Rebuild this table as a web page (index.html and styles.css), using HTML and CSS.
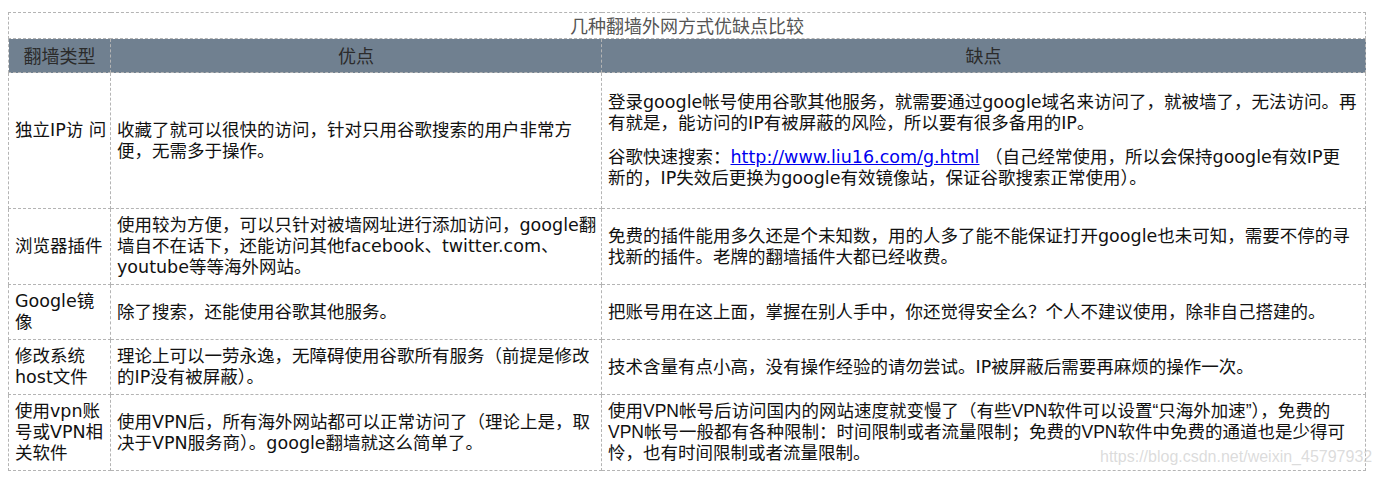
FILE: index.html
```html
<!DOCTYPE html>
<html lang="zh-CN">
<head>
  <meta charset="UTF-8">
  <title>几种翻墙外网方式优缺点比较</title>
  <link rel="stylesheet" href="styles.css">
</head>
<body>
  <div class="page">
    <table class="compare">
      <colgroup>
        <col class="col-type">
        <col class="col-pro">
        <col class="col-con">
      </colgroup>
      <thead>
        <tr class="title-row">
          <th colspan="3">几种翻墙外网方式优缺点比较</th>
        </tr>
        <tr class="head-row">
          <th>翻墙类型</th>
          <th>优点</th>
          <th>缺点</th>
        </tr>
      </thead>
      <tbody>
        <tr>
          <td class="type nowrap lift">独立IP访 问</td>
          <td>收藏了就可以很快的访问，针对只用谷歌搜索的用户非常方便，无需多于操作。</td>
          <td>
            <p>登录google帐号使用谷歌其他服务，就需要通过google域名来访问了，就被墙了，无法访问。再有就是，能访问的IP有被屏蔽的风险，所以要有很多备用的IP。</p>
            <p class="narrow">谷歌快速搜索：<a href="#">http://www.liu16.com/g.html</a> （自己经常使用，所以会保持google有效IP更新的，IP失效后更换为google有效镜像站，保证谷歌搜索正常使用）。</p>
          </td>
        </tr>
        <tr>
          <td class="type">浏览器插件</td>
          <td>使用较为方便，可以只针对被墙网址进行添加访问，google翻墙自不在话下，还能访问其他facebook、twitter.com、youtube等等海外网站。</td>
          <td>免费的插件能用多久还是个未知数，用的人多了能不能保证打开google也未可知，需要不停的寻找新的插件。老牌的翻墙插件大都已经收费。</td>
        </tr>
        <tr>
          <td class="type">Google镜像</td>
          <td>除了搜索，还能使用谷歌其他服务。</td>
          <td>把账号用在这上面，掌握在别人手中，你还觉得安全么？个人不建议使用，除非自己搭建的。</td>
        </tr>
        <tr>
          <td class="type">修改系统host文件</td>
          <td>理论上可以一劳永逸，无障碍使用谷歌所有服务（前提是修改的IP没有被屏蔽）。</td>
          <td>技术含量有点小高，没有操作经验的请勿尝试。IP被屏蔽后需要再麻烦的操作一次。</td>
        </tr>
        <tr>
          <td class="type">使用vpn账号或VPN相关软件</td>
          <td>使用VPN后，所有海外网站都可以正常访问了（理论上是，取决于VPN服务商）。google翻墙就这么简单了。</td>
          <td class="alt">使用VPN帐号后访问国内的网站速度就变慢了（有些VPN软件可以设置“只海外加速”），免费的VPN帐号一般都有各种限制：时间限制或者流量限制；免费的VPN软件中免费的通道也是少得可怜，也有时间限制或者流量限制。</td>
        </tr>
      </tbody>
    </table>
    <div class="watermark">https://blog.csdn.net/weixin_45797932</div>
  </div>
</body>
</html>
```

FILE: styles.css
```css
body {
  margin: 0;
  background: #fff;
  font-family: "DejaVu Sans", "Noto Sans CJK SC", sans-serif;
  color: #111;
}
.page {
  position: relative;
  padding: 12px 14px 0 8px;
}
.compare {
  width: 1357px;
  table-layout: fixed;
  border-collapse: collapse;
  font-size: 17.5px;
  line-height: 21px;
}
.col-type { width: 102px; }
.col-pro { width: 491px; }
.col-con { width: 764px; }

.compare th,
.compare td {
  border: 1px dashed #b4b4b4;
}
.compare th {
  font-family: "Noto Sans CJK SC", serif;
  font-weight: normal;
  font-size: 18px;
  text-align: center;
  padding: 0;
}
.title-row th {
  height: 25px;
  color: #555;
  line-height: 25px;
}
.head-row th {
  height: 33px;
  background-color: #708090;
  color: #2b2b2b;
  line-height: 33px;
}
.compare td {
  padding: 6px 4px 6px 6px;
  vertical-align: middle;
}
.compare td p {
  margin: 13px 0;
}
.compare td p.narrow {
  margin-right: 12px;
}
.compare a {
  color: #0000ee;
}
.nowrap {
  white-space: nowrap;
}
.lift {
  padding-bottom: 27px !important;
}
.alt {
  font-family: "Liberation Sans", "Noto Sans CJK SC", sans-serif;
}
.watermark {
  position: absolute;
  left: 1100px;
  top: 448px;
  font-family: "Liberation Sans", sans-serif;
  font-size: 16px;
  color: rgba(190, 190, 190, 0.55);
  white-space: nowrap;
}
```
